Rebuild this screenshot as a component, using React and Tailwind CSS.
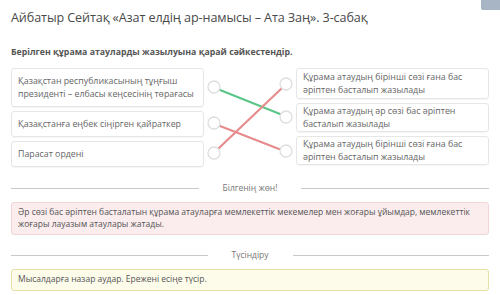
import React from 'react'

const leftItems = [
  { text: 'Қазақстан республикасының тұңғыш президенті – елбасы кеңсесінің төрағасы', h: 'h-[39px]' },
  { text: 'Қазақстанға еңбек сіңірген қайраткер', h: 'h-[26px]' },
  { text: 'Парасат ордені', h: 'h-[26px]' },
]

const rightItems = [
  { text: 'Құрама атаудың бірінші сөзі ғана бас әріптен басталып жазылады', h: 'h-[31px]' },
  { text: 'Құрама атаудың әр сөзі бас әріптен басталып жазылады', h: 'h-[29px]' },
  { text: 'Құрама атаудың бірінші сөзі ғана бас әріптен басталып жазылады', h: 'h-[29px]' },
]

const Divider = ({ label }) => (
  <div className="flex items-center gap-3">
    <div className="flex-1 h-px bg-[#c9c9c9]" />
    <span className="text-[8.5px] text-[#777] px-3">{label}</span>
    <div className="flex-1 h-px bg-[#c9c9c9]" />
  </div>
)

const App = () => {
  return (
    <div className="relative w-[500px] h-[295px] overflow-hidden bg-white px-[11px] pt-[8px] font-['Open_Sans',sans-serif]">
      {/* обрезанная картинка в углу */}
      <div className="absolute right-0 top-0 w-[19px] h-[10px] bg-[#a7b5c4] rounded-bl-[2px]" />

      <h1 className="text-[12.6px] leading-[20px] text-[#4a4a4a] tracking-[-0.1px]">
        Айбатыр Сейтақ «Азат елдің ар-намысы – Ата Заң». 3-сабақ
      </h1>
      <p className="mt-[18px] text-[8.75px] leading-[12px] font-bold text-[#555]">
        Берілген құрама атауларды жазылуына қарай сәйкестендір.
      </p>

      <div className="mt-[10px] flex">
        {/* Сол жақ */}
        <div className="w-[196px] flex flex-col gap-[4px]">
          {leftItems.map((item, i) => (
            <div
              key={i}
              className={`${item.h} flex items-center pl-[6px] pr-[2px] border border-[#e6e6e6] rounded-[3px] shadow-[0_1px_1px_rgba(0,0,0,0.04)] text-[8.8px] leading-[13px] text-[#666]`}
            >
              {item.text}
            </div>
          ))}
        </div>

        {/* Сызықтар */}
        <svg width="92" height="100" viewBox="0 0 92 100" className="shrink-0">
          <line x1="16" y1="22" x2="76" y2="46" stroke="#5cc689" strokeWidth="2.2" strokeLinecap="round" />
          <line x1="16" y1="58" x2="75" y2="81" stroke="#e68c8c" strokeWidth="2.2" strokeLinecap="round" />
          <line x1="15" y1="80" x2="78" y2="20" stroke="#e68c8c" strokeWidth="2.2" strokeLinecap="round" />
          {[19, 55, 85].map((y) => (
            <circle key={'l' + y} cx="10" cy={y} r="6" fill="white" stroke="#dedede" strokeWidth="1.3" />
          ))}
          {[16, 49, 83].map((y) => (
            <circle key={'r' + y} cx="82" cy={y} r="6" fill="white" stroke="#dedede" strokeWidth="1.3" />
          ))}
        </svg>

        {/* Оң жақ */}
        <div className="w-[196px] flex flex-col gap-[4px]">
          {rightItems.map((item, i) => (
            <div
              key={i}
              className={`${item.h} flex items-center px-[6px] border border-[#e6e6e6] rounded-[3px] shadow-[0_1px_1px_rgba(0,0,0,0.04)] text-[8.8px] leading-[13px] text-[#666]`}
            >
              {item.text}
            </div>
          ))}
        </div>
      </div>

      <div className="mt-[14px]">
        <Divider label="Білгенің жөн!" />
      </div>
      <div className="mt-[7px] h-[33px] flex items-center px-[6px] bg-[#fbeced] border border-[#f1d6d8] rounded-[3px] text-[8.5px] leading-[12px] text-[#555]">
        Әр сөзі бас әріптен басталатын құрама атауларға мемлекеттік мекемелер мен жоғары ұйымдар, мемлекеттік жоғары лауазым атаулары жатады.
      </div>

      <div className="mt-[14px]">
        <Divider label="Түсіндіру" />
      </div>
      <div className="mt-[7px] h-[22px] flex items-center px-[6px] bg-[#fdfbea] border border-[#e6e0a8] rounded-[3px] text-[8.5px] text-[#555]">
        Мысалдарға назар аудар. Ережені есіңе түсір.
      </div>
    </div>
  )
}

export default App
